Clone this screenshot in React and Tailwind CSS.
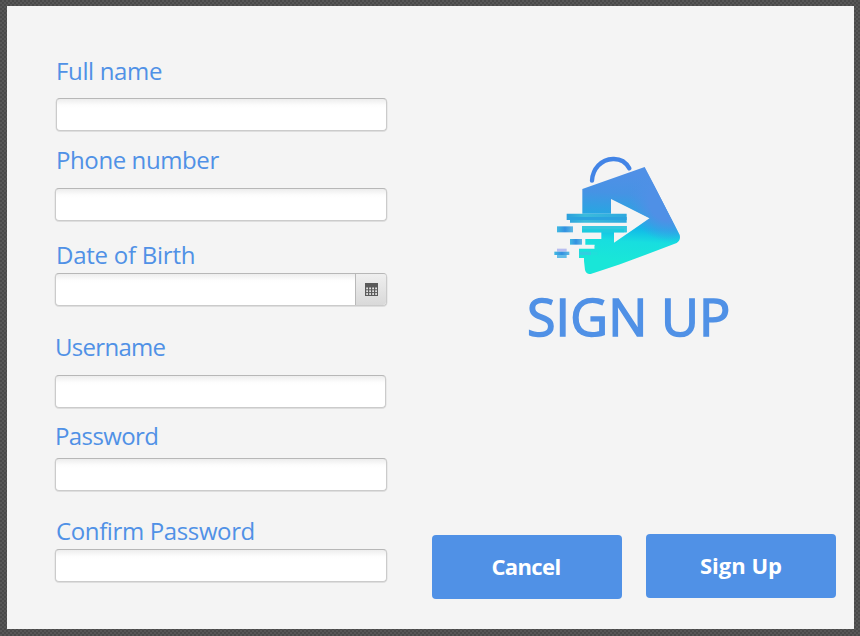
const fieldBox =
  "block h-[33px] rounded-[4px] border border-[#cbcbcb] border-t-[#b7b7b7] bg-white bg-linear-to-b from-[#ededed] via-[#fdfdfd] via-20% to-white to-30% shadow-[0_0.5px_0_0.5px_#dedede] outline-none";

const fields = [
  { name: "Full name", row: "", label: "ml-[2px] tracking-[-0.35px]", box: "mt-[11px] ml-[2px] w-[331px]" },
  { name: "Phone number", row: "mt-[13px]", label: "ml-[2px] tracking-[-0.4px]", box: "mt-[12px] ml-px w-[332px]" },
  { name: "Date of Birth", row: "mt-[18px]", label: "ml-[2px] tracking-[-0.25px]", box: "mt-[2px] ml-px w-[332px]", date: true },
  { name: "Username", row: "mt-[25px]", label: "ml-px tracking-[-0.7px]", box: "mt-[12px] ml-px w-[331px]" },
  { name: "Password", row: "mt-[12px]", label: "ml-px tracking-[-0.6px]", box: "mt-[6px] ml-px w-[332px]", type: "password" },
  { name: "Confirm Password", row: "mt-[24px]", label: "ml-[2px] tracking-[-0.37px]", box: "mt-[2px] ml-px w-[332px]", type: "password" },
];

function CalendarIcon() {
  return (
    <svg width="13" height="13" viewBox="0 0 13 13">
      <rect width="13" height="13" fill="#5a5a5a" />
      <g fill="#e4e4e4">
        {[4.5, 7.3, 10.1].map((y) =>
          [1.2, 4.2, 7.2, 10.2].map((x) => <rect key={`${x}-${y}`} x={x} y={y} width="1.8" height="1.8" />)
        )}
      </g>
    </svg>
  );
}

function Field({ name, row, label, box, date, type = "text" }) {
  return (
    <label className={`block ${row}`}>
      <span className={`block h-8 text-[24px] leading-8 whitespace-nowrap text-[#5091e6] ${label}`}>{name}</span>
      {date ? (
        <span className={`flex! overflow-hidden ${fieldBox} ${box}`}>
          <input className="min-w-0 flex-1 bg-transparent outline-none" />
          <span className="flex w-[31px] items-center justify-center border-l border-[#b9b9b9] bg-linear-to-b from-[#efefef] to-[#d9d9d9]">
            <CalendarIcon />
          </span>
        </span>
      ) : (
        <input type={type} className={`${fieldBox} ${box}`} />
      )}
    </label>
  );
}

function Logo() {
  return (
    <svg width="145" height="135" viewBox="0 0 435 405">
      <defs>
        <linearGradient id="bag" gradientUnits="userSpaceOnUse" x1="250" y1="90" x2="235" y2="345">
          <stop offset="0" stopColor="#4f90e6" />
          <stop offset="0.22" stopColor="#4693e4" />
          <stop offset="0.45" stopColor="#2aa4e2" />
          <stop offset="0.62" stopColor="#12b8e8" />
          <stop offset="0.78" stopColor="#18dedf" />
          <stop offset="1" stopColor="#19e6d8" />
        </linearGradient>
        <radialGradient id="shade" gradientUnits="userSpaceOnUse" cx="375" cy="165" r="125">
          <stop offset="0" stopColor="#4f90e6" />
          <stop offset="0.5" stopColor="#4f90e6" />
          <stop offset="1" stopColor="#4f90e6" stopOpacity="0" />
        </radialGradient>
        <linearGradient id="teal" x1="0" y1="0" x2="1" y2="0">
          <stop offset="0" stopColor="#2c9fdc" />
          <stop offset="0.3" stopColor="#3bbbdc" />
          <stop offset="1" stopColor="#2da9df" />
        </linearGradient>
        <linearGradient id="dash" x1="0" y1="0" x2="1" y2="0">
          <stop offset="0" stopColor="#40b9e2" />
          <stop offset="0.5" stopColor="#3390e0" />
          <stop offset="1" stopColor="#5bb9e4" />
        </linearGradient>
      </defs>
      <path d="M141 107C143 72 168 43 204 42C227 41 243 52 253 70" fill="none" stroke="#4284e6" strokeWidth="13" strokeLinecap="round" />
      <path
        d="M112 132L299 66L404 270Q408 285 395 294C310 326 225 360 137 387Q124 389 120 375L117 348V339H102V311H149V299H121V282H169V262H111V243H245V262H207V293L314 220L198 162V206H112Z"
        fill="url(#bag)"
      />
      <path d="M299 66L404 270Q408 285 395 294L270 342L270 250L314 220L198 162L230 91Z" fill="url(#shade)" />
      <path d="M65 206H245V233H75V225H65Z" fill="url(#teal)" />
      <path d="M75 216H245V225H75Z" fill="#2aa3df" />
      <path d="M111 243H245V262H111Z" fill="#35c8df" />
      <path d="M111 253H237V262H111Z" fill="#1dccdf" />
      <path d="M149 302H158V311H149Z M140 320H158V330H140Z" fill="#1fe0da" />
      <path d="M102 320H138V330H102Z" fill="#31cfe0" />
      <path d="M36 244H84V262H36Z" fill="url(#dash)" />
      <path d="M75 282H111V299H75Z" fill="url(#dash)" />
      <path d="M36 311H65V320H36Z" fill="#b7bdf0" />
      <path d="M28 320H73V330H28Z" fill="url(#dash)" />
      <path d="M36 330H65V339H36Z" fill="#62bce8" />
    </svg>
  );
}

export default function App() {
  return (
    <div className="h-[636px] w-[860px] overflow-hidden bg-[#4d4d4d] bg-[repeating-conic-gradient(#575757_0_25%,#494949_0_50%)] bg-size-[4px_4px] pt-[6px] pl-[7px] font-['Open_Sans','Noto_Sans',sans-serif]">
      <main className="flex h-[623px] w-[847px] bg-[#f4f4f4]">
        <form className="ml-[47px] w-[336px] pt-[49px]">
          {fields.map((field) => (
            <Field key={field.name} {...field} />
          ))}
        </form>
        <section className="ml-[35px] flex w-[411px] flex-col">
          <div className="mt-[139px] ml-[120px] h-[135px]">
            <Logo />
          </div>
          <h1 className="ml-[102px] h-[72px] text-[52px] leading-[71px] font-normal tracking-[0.1px] whitespace-nowrap text-[#5091e6] [-webkit-text-stroke:1.5px_#5091e6]">SIGN UP</h1>
          <div className="mt-[181px] flex gap-6 pl-[7px] text-[22px] font-bold text-white">
            <button className="mt-[2px] h-[64px] w-[190px] shrink-0 rounded-[4px] bg-[#5091e6] pr-[2px] pb-[2px] tracking-[-0.6px]">Cancel</button>
            <button className="mt-px h-[64px] w-[190px] shrink-0 rounded-[4px] bg-[#5091e6] pb-[2px]">Sign Up</button>
          </div>
        </section>
      </main>
    </div>
  );
}
